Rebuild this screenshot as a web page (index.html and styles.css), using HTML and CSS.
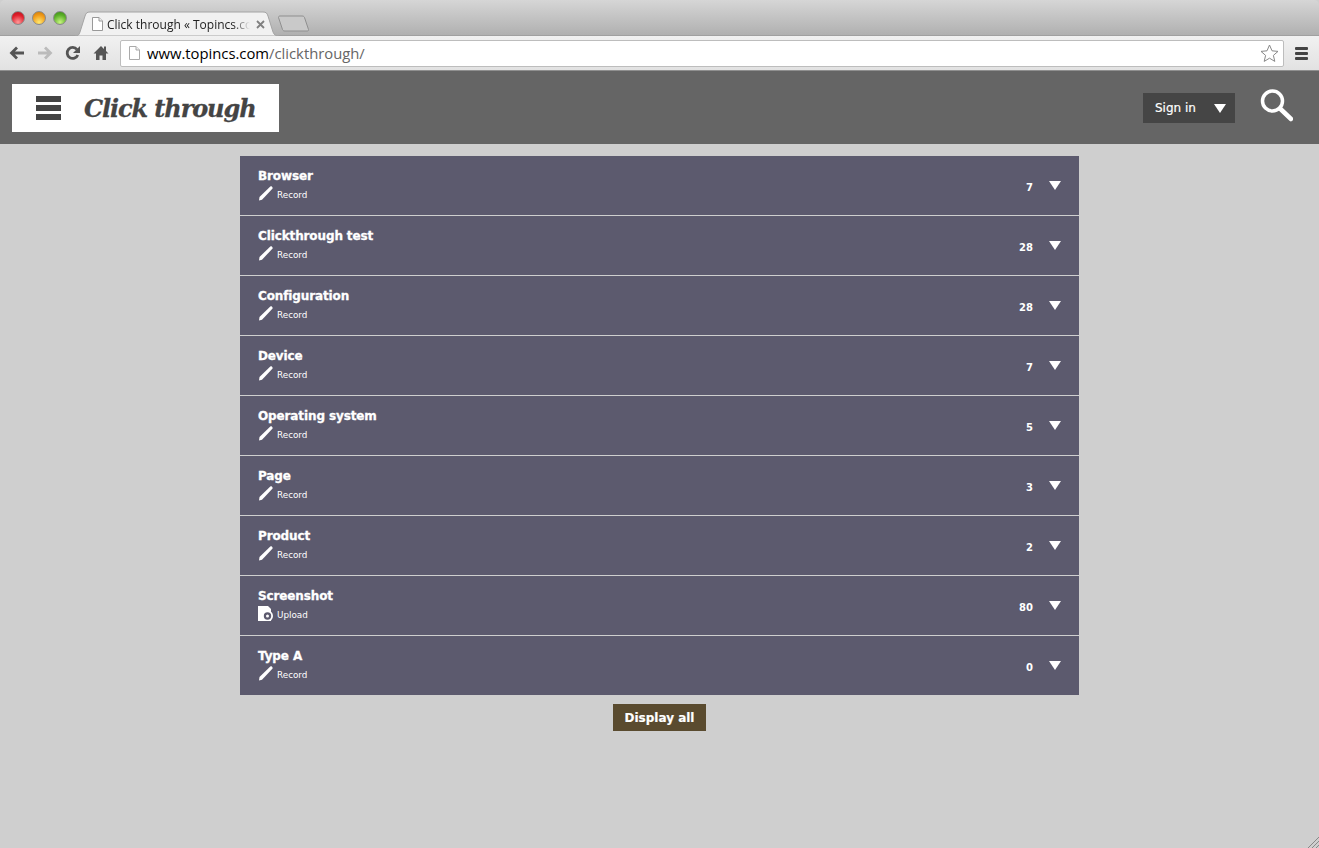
FILE: index.html
```html
<!DOCTYPE html>
<html lang="en">
<head>
<meta charset="utf-8">
<title>Click through</title>
<link rel="stylesheet" href="styles.css">
</head>
<body>
<div class="chrome">
  <div class="tabstrip">
    <div class="lights"><i class="light red"></i><i class="light amber"></i><i class="light green"></i></div>
    <div class="tab">
      <svg class="tabshape" width="205" height="25" viewBox="0 0 205 25"><path d="M0 25c3 0 4-1 5-4L10 5c1-3 2-4 5-4h173c3 0 4 1 5 4l5 16c1 3 3 4 6 4z" fill="#f1f1f1" stroke="#a4a4a4"/></svg>
      <svg class="doc" width="11" height="14" viewBox="0 0 11 14"><path d="M.5.5h6.500l3.500 3.500v9.500h-10z" fill="#fff" stroke="#999"/><path d="M7 .5v3.500h3.500" fill="#eee" stroke="#999"/></svg>
      <span class="tabtitle">Click through « Topincs.com</span>
      <svg class="tabx" width="9" height="9" viewBox="0 0 9 9"><path d="m1 1 7 7M8 1 1 8" stroke="#808080" stroke-width="1.800" fill="none"/></svg>
    </div>
    <svg class="newtab" width="33" height="18" viewBox="0 0 33 18"><path d="M1.500 2.500c0-1 .5-1.500 1.500-1.500h22c1.500 0 2 .5 2.500 1.500l4 12c.3 1-.2 1.500-1.500 1.500H8c-1.500 0-2-.5-2.500-1.500z" fill="#c9c9c9" stroke="#8f8f8f"/></svg>
  </div>
  <div class="toolbar">
    <svg class="navicon" width="16" height="14" viewBox="0 0 16 14"><path d="M15 7H3M8 1.500 2.500 7 8 12.500" fill="none" stroke="#555" stroke-width="2.800"/></svg>
    <svg class="navicon" width="16" height="14" viewBox="0 0 16 14"><path d="M1 7h12M8 1.500 13.500 7 8 12.500" fill="none" stroke="#bbb" stroke-width="2.800"/></svg>
    <svg class="navicon" width="16" height="16" viewBox="0 0 16 16"><path d="M12.800 10a5.500 5.500 0 1 1-.8-5.500" fill="none" stroke="#555" stroke-width="2.800"/><path d="M15 1v7H8z" fill="#555"/></svg>
    <svg class="navicon" width="16" height="16" viewBox="0 0 16 16"><path d="M8 1 .5 8.500h2.500v6.500h3.500v-4.500h3V15H13V8.500h2.500L13 6V1.500h-2V4z" fill="#555"/></svg>
    <div class="omnibox">
      <svg class="omnidoc" width="11" height="14" viewBox="0 0 11 14"><path d="M.5.5h6.500l3.500 3.500v9.500H.5z" fill="#fff" stroke="#aaa"/><path d="M7 .5v3.500h3.500" fill="#eee" stroke="#aaa"/></svg>
      <span class="url"><span class="host">www.topincs.com</span>/clickthrough/</span>
      <svg class="star" width="19" height="18" viewBox="0 0 19 18"><path d="m9.500 1 2.500 5.800 6 .6-4.600 4 1.400 6-5.300-3.200-5.300 3.200 1.400-6-4.600-4 6-.6z" fill="#fff" stroke="#888"/></svg>
    </div>
    <div class="chromemenu"><i></i><i></i><i></i></div>
  </div>
</div>
<header class="appbar">
  <div class="brand">
    <div class="burger"><i></i><i></i><i></i></div>
    <span class="brandtitle">Click through</span>
  </div>
  <div class="appactions">
    <div class="signin"><span>Sign in</span><i class="tri"></i></div>
    <svg class="search" width="33" height="34" viewBox="0 0 33 34"><circle cx="12.500" cy="13" r="10" fill="none" stroke="#fff" stroke-width="3.500"/><path d="m20 20.500 11 10.500" fill="none" stroke="#fff" stroke-width="4.500" stroke-linecap="round"/></svg>
  </div>
</header>
<main class="content">
  <div class="list">
    <div class="row"><div class="rowmain"><div class="name">Browser</div><div class="action"><svg class="pen" width="15" height="15" viewBox="0 0 15 15"><path d="M1 14.500 1.500 11 12.300.6c.5-.4 1-.4 1.500 0l.6.6c.4.5.4 1 0 1.500L4 13.700z" fill="#fff"/></svg><span>Record</span></div></div><span class="count">7</span><i class="tri"></i></div>
    <div class="row"><div class="rowmain"><div class="name">Clickthrough test</div><div class="action"><svg class="pen" width="15" height="15" viewBox="0 0 15 15"><path d="M1 14.500 1.500 11 12.300.6c.5-.4 1-.4 1.500 0l.6.6c.4.5.4 1 0 1.500L4 13.700z" fill="#fff"/></svg><span>Record</span></div></div><span class="count">28</span><i class="tri"></i></div>
    <div class="row"><div class="rowmain"><div class="name">Configuration</div><div class="action"><svg class="pen" width="15" height="15" viewBox="0 0 15 15"><path d="M1 14.500 1.500 11 12.300.6c.5-.4 1-.4 1.500 0l.6.6c.4.5.4 1 0 1.500L4 13.700z" fill="#fff"/></svg><span>Record</span></div></div><span class="count">28</span><i class="tri"></i></div>
    <div class="row"><div class="rowmain"><div class="name">Device</div><div class="action"><svg class="pen" width="15" height="15" viewBox="0 0 15 15"><path d="M1 14.500 1.500 11 12.300.6c.5-.4 1-.4 1.500 0l.6.6c.4.5.4 1 0 1.500L4 13.700z" fill="#fff"/></svg><span>Record</span></div></div><span class="count">7</span><i class="tri"></i></div>
    <div class="row"><div class="rowmain"><div class="name">Operating system</div><div class="action"><svg class="pen" width="15" height="15" viewBox="0 0 15 15"><path d="M1 14.500 1.500 11 12.300.6c.5-.4 1-.4 1.500 0l.6.6c.4.5.4 1 0 1.500L4 13.700z" fill="#fff"/></svg><span>Record</span></div></div><span class="count">5</span><i class="tri"></i></div>
    <div class="row"><div class="rowmain"><div class="name">Page</div><div class="action"><svg class="pen" width="15" height="15" viewBox="0 0 15 15"><path d="M1 14.500 1.500 11 12.300.6c.5-.4 1-.4 1.500 0l.6.6c.4.5.4 1 0 1.500L4 13.700z" fill="#fff"/></svg><span>Record</span></div></div><span class="count">3</span><i class="tri"></i></div>
    <div class="row"><div class="rowmain"><div class="name">Product</div><div class="action"><svg class="pen" width="15" height="15" viewBox="0 0 15 15"><path d="M1 14.500 1.500 11 12.300.6c.5-.4 1-.4 1.500 0l.6.6c.4.5.4 1 0 1.500L4 13.700z" fill="#fff"/></svg><span>Record</span></div></div><span class="count">2</span><i class="tri"></i></div>
    <div class="row"><div class="rowmain"><div class="name">Screenshot</div><div class="action"><svg class="pen" width="15" height="15" viewBox="0 0 15 15"><path d="M0 0h10l3 3v12H0z" fill="#fff"/><circle cx="9.500" cy="10" r="5.500" fill="#fff"/><circle cx="9.500" cy="10" r="3.700" fill="#5c5a6e"/><circle cx="9.500" cy="10" r="1.500" fill="#fff"/></svg><span>Upload</span></div></div><span class="count">80</span><i class="tri"></i></div>
    <div class="row"><div class="rowmain"><div class="name">Type A</div><div class="action"><svg class="pen" width="15" height="15" viewBox="0 0 15 15"><path d="M1 14.500 1.500 11 12.300.6c.5-.4 1-.4 1.500 0l.6.6c.4.5.4 1 0 1.500L4 13.700z" fill="#fff"/></svg><span>Record</span></div></div><span class="count">0</span><i class="tri"></i></div>
  </div>
  <button class="displayall" type="button">Display all</button>
</main>
<svg class="grip" width="12" height="12" viewBox="0 0 12 12"><path d="M1 12 12 1M5 12l7-7M9 12l3-3" stroke="#888" fill="none"/></svg>
</body>
</html>
```
FILE: styles.css
```css
* { box-sizing: border-box; }
html, body { margin: 0; height: 100%; }
body { background: #cfcfcf; font-family: "DejaVu Sans", sans-serif; overflow: hidden; position: relative; }
.chrome { height: 71px; border-bottom: 1px solid #8f8f8f; }
.tabstrip { height: 36px; background: linear-gradient(#d6d6d6, #b0b0b0); border-radius: 5px 5px 0 0; display: flex; align-items: flex-end; padding-left: 11px; border-bottom: 1px solid #a0a0a0; }
.lights { display: flex; gap: 7px; align-self: flex-start; margin-top: 11px; }
.light { width: 14px; height: 14px; border-radius: 50%; border: 1px solid #8a8a8a; display: block; }
.red { background: radial-gradient(circle at 50% 85%, #ff9a9a, #e0202c 60%, #b5101a); }
.amber { background: radial-gradient(circle at 50% 85%, #ffe870, #f09a18 60%, #c87808); }
.green { background: radial-gradient(circle at 50% 85%, #c8f580, #5cb028 60%, #3a8a14); }
.tab { width: 204px; height: 25px; margin-left: 8px; margin-bottom: -1px; display: flex; align-items: center; padding: 1px 0 0 17px; position: relative; }
.tabshape { position: absolute; left: 0; top: 0; }
.doc, .tabtitle, .tabx { position: relative; }
.doc { flex: none; margin-right: 4px; }
.tabtitle { font-family: "Open Sans", sans-serif; font-size: 12px; color: #222; white-space: nowrap; overflow: hidden; width: 143px; flex: none; -webkit-mask-image: linear-gradient(90deg, #000 88%, transparent); mask-image: linear-gradient(90deg, #000 88%, transparent); }
.tabx { flex: none; margin-left: 6px; }
.newtab { flex: none; margin: 0 0 2px -2px; }
.toolbar { height: 34px; background: linear-gradient(#f1f1f1, #e2e2e2); display: flex; align-items: center; padding: 0 11px 0 9px; }
.navicon { flex: none; margin-right: 12px; }
.navicon:nth-child(4) { margin-right: 11px; }
.omnibox { height: 27px; flex: 1; background: #fff; border: 1px solid #bdbdbd; border-radius: 2px; display: flex; align-items: center; padding: 0 4px 0 8px; }
.omnidoc { flex: none; margin-right: 7px; }
.url { flex: 1; font-family: "Open Sans", sans-serif; font-size: 14.800px; color: #666; white-space: nowrap; }
.host { color: #000; }
.star { flex: none; }
.chromemenu { margin-left: 11px; width: 13px; display: flex; flex-direction: column; gap: 2px; }
.chromemenu i { display: block; height: 3px; background: #444; border-radius: 1px; }
.appbar { height: 73px; background: #656565; display: flex; align-items: flex-start; justify-content: space-between; padding: 13px 26px 0 12px; }
.brand { width: 267px; height: 48px; background: #fff; display: flex; align-items: center; padding-left: 24px; }
.burger { width: 25px; display: flex; flex-direction: column; gap: 3px; margin: -1px 23px 0 0; }
.burger i { display: block; height: 6px; background: #444; }
.brandtitle { font-family: "DejaVu Serif", serif; font-style: italic; font-weight: 700; font-size: 24px; color: #444; white-space: nowrap; letter-spacing: -1.1px; -webkit-text-stroke: 0.3px #444; }
.appactions { display: flex; align-items: flex-start; }
.signin { width: 92px; height: 30px; margin-top: 9px; background: #454545; display: flex; align-items: center; padding: 0 9px 0 12px; justify-content: space-between; font-size: 12px; color: #fff; -webkit-text-stroke: 0.2px #fff; }
.tri { display: block; width: 0; height: 0; flex: none; border-left: 6.500px solid transparent; border-right: 6.500px solid transparent; border-top: 9px solid #fff; }
.search { margin: 4px 0 0 25px; }
.content { display: flex; flex-direction: column; align-items: center; padding-top: 12px; }
.list { width: 839px; background: #5c5a6e; }
.row { height: 60px; display: flex; align-items: center; padding: 0 18px; border-bottom: 1px solid #cfcfcf; color: #fff; }
.row:last-child { height: 59px; border-bottom: 0; }
.rowmain { flex: 1; }
.name { font-size: 12px; font-weight: 700; line-height: 16px; letter-spacing: -0.12px; -webkit-text-stroke: 0.3px #fff; }
.action { display: flex; align-items: center; height: 17px; margin-top: 2px; font-size: 8.800px; }
.pen { flex: none; margin: -2px 4px 0 0; }
.count { font-size: 10px; font-weight: 700; margin-right: 16px; margin-top: 3px; }
.displayall { width: 93px; height: 27px; margin-top: 9px; background: #5a4b2f; border: 0; padding: 0; color: #fff; font-family: "DejaVu Sans", sans-serif; font-size: 12px; font-weight: 700; -webkit-text-stroke: 0.2px #fff; }
.grip { position: absolute; right: 0; bottom: 0; }
```
